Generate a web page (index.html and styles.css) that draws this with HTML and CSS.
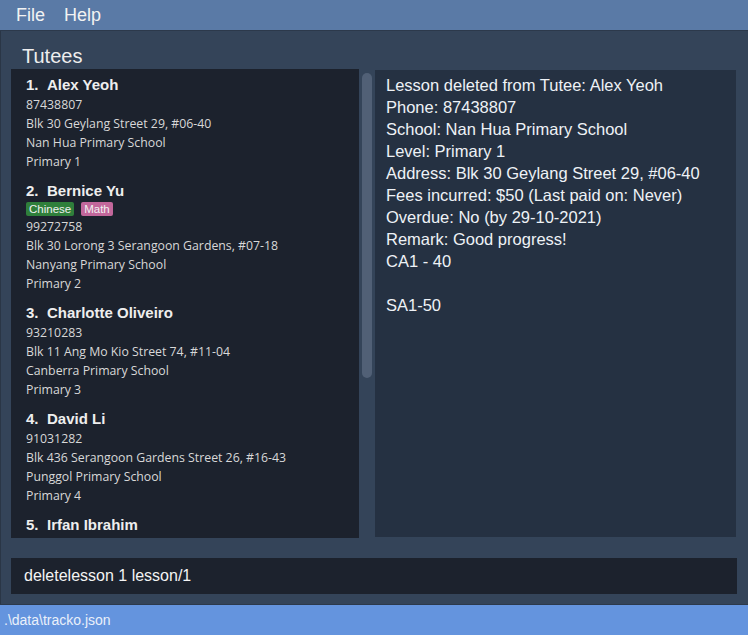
FILE: index.html
```html
<!DOCTYPE html>
<html>
<head>
<meta charset="utf-8">
<link rel="stylesheet" href="styles.css">
</head>
<body>
<div class="app">
  <div class="menubar">
    <span class="menu-item">File</span>
    <span class="menu-item">Help</span>
  </div>
  <div class="main">
    <div class="title">Tutees</div>
    <div class="panes">
      <div class="list-wrap">
        <div class="list">
          <div class="cell">
            <div class="name"><span class="idx">1.</span>Alex Yeoh</div>
            <div class="line">87438807</div>
            <div class="line">Blk 30 Geylang Street 29, #06-40</div>
            <div class="line">Nan Hua Primary School</div>
            <div class="line">Primary 1</div>
          </div>
          <div class="cell">
            <div class="name"><span class="idx">2.</span>Bernice Yu</div>
            <div class="tags"><span class="tag green">Chinese</span><span class="tag pink">Math</span></div>
            <div class="line">99272758</div>
            <div class="line">Blk 30 Lorong 3 Serangoon Gardens, #07-18</div>
            <div class="line">Nanyang Primary School</div>
            <div class="line">Primary 2</div>
          </div>
          <div class="cell">
            <div class="name"><span class="idx">3.</span>Charlotte Oliveiro</div>
            <div class="line">93210283</div>
            <div class="line">Blk 11 Ang Mo Kio Street 74, #11-04</div>
            <div class="line">Canberra Primary School</div>
            <div class="line">Primary 3</div>
          </div>
          <div class="cell">
            <div class="name"><span class="idx">4.</span>David Li</div>
            <div class="line">91031282</div>
            <div class="line">Blk 436 Serangoon Gardens Street 26, #16-43</div>
            <div class="line">Punggol Primary School</div>
            <div class="line">Primary 4</div>
          </div>
          <div class="cell">
            <div class="name"><span class="idx">5.</span>Irfan Ibrahim</div>
          </div>
        </div>
        <div class="scroll-track"><div class="scroll-thumb"></div></div>
      </div>
      <div class="result">
        <div>Lesson deleted from Tutee: Alex Yeoh</div>
        <div>Phone: 87438807</div>
        <div>School: Nan Hua Primary School</div>
        <div>Level: Primary 1</div>
        <div>Address: Blk 30 Geylang Street 29, #06-40</div>
        <div>Fees incurred: $50 (Last paid on: Never)</div>
        <div>Overdue: No (by 29-10-2021)</div>
        <div>Remark: Good progress!</div>
        <div>CA1 - 40</div>
        <div>&nbsp;</div>
        <div>SA1-50</div>
      </div>
    </div>
    <div class="command">deletelesson 1 lesson/1</div>
  </div>
  <div class="status">.\data\tracko.json</div>
</div>
</body>
</html>
```
FILE: styles.css
```css
html, body {
  margin: 0;
  padding: 0;
  background: #344459;
}
body {
  font-family: "Open Sans", "Noto Sans", sans-serif;
  color: #e8e8e8;
}
.app {
  width: 748px;
  height: 635px;
  display: flex;
  flex-direction: column;
  overflow: hidden;
}
.menubar {
  height: 30px;
  background: #5a7aa6;
  border-bottom: 1px solid #2c394b;
  display: flex;
  align-items: center;
  padding-left: 16px;
  gap: 19px;
  font-family: "Liberation Sans", sans-serif;
  font-size: 18px;
  color: #f2f2f2;
}
.main {
  flex: 1;
  display: flex;
  flex-direction: column;
  padding: 0 11px;
  box-shadow: inset 1px 0 #2a3646;
}
.title {
  font-family: "Liberation Sans", sans-serif;
  font-size: 20px;
  color: #eeeeee;
  padding-left: 11px;
  height: 38px;
  line-height: 24px;
  padding-top: 13px;
  box-sizing: border-box;
}
.panes {
  display: flex;
  height: 469px;
}
.list-wrap {
  display: flex;
  width: 364px;
}
.list {
  width: 348px;
  background: #1c222d;
  overflow: hidden;
  padding: 6px 0 0 15px;
  box-sizing: border-box;
}
.scroll-track {
  width: 16px;
  padding: 4px 3px 0 3px;
  box-sizing: border-box;
}
.scroll-thumb {
  height: 305px;
  background: #516076;
  border-radius: 5px;
}
.cell {
  padding-bottom: 10px;
}
.name {
  font-family: "Liberation Sans", sans-serif;
  font-weight: bold;
  font-size: 15px;
  color: #eeeeee;
  height: 20px;
  line-height: 20px;
}
.idx {
  display: inline-block;
  width: 21px;
}
.line {
  font-size: 12.3px;
  height: 19px;
  line-height: 19px;
  color: #d8d8d8;
}
.tags {
  display: flex;
  gap: 7px;
  height: 16px;
  align-items: center;
}
.tag {
  font-family: "Liberation Sans", sans-serif;
  font-size: 11.5px;
  color: #f0f0f0;
  padding: 0 3px;
  height: 14px;
  line-height: 14px;
  border-radius: 2px;
}
.green { background: #2f7f3b; }
.pink { background: #c2679b; }
.result {
  margin-top: 1px;
  width: 361px;
  height: 467px;
  background: #253142;
  padding: 4px 11px;
  box-sizing: border-box;
  font-family: "Liberation Sans", sans-serif;
  font-size: 16.5px;
  line-height: 22px;
  color: #eef2f6;
}
.command {
  margin-top: 20px;
  height: 36px;
  background: #1c222d;
  line-height: 36px;
  padding-left: 13px;
  font-family: "Liberation Sans", sans-serif;
  font-size: 16px;
  color: #f4f4f4;
}
.status {
  height: 30px;
  background: #6494de;
  border-top: 1px solid #2c394b;
  line-height: 30px;
  padding-left: 4px;
  font-family: "Liberation Sans", sans-serif;
  font-size: 14px;
  color: #eaf0fa;
}
```
